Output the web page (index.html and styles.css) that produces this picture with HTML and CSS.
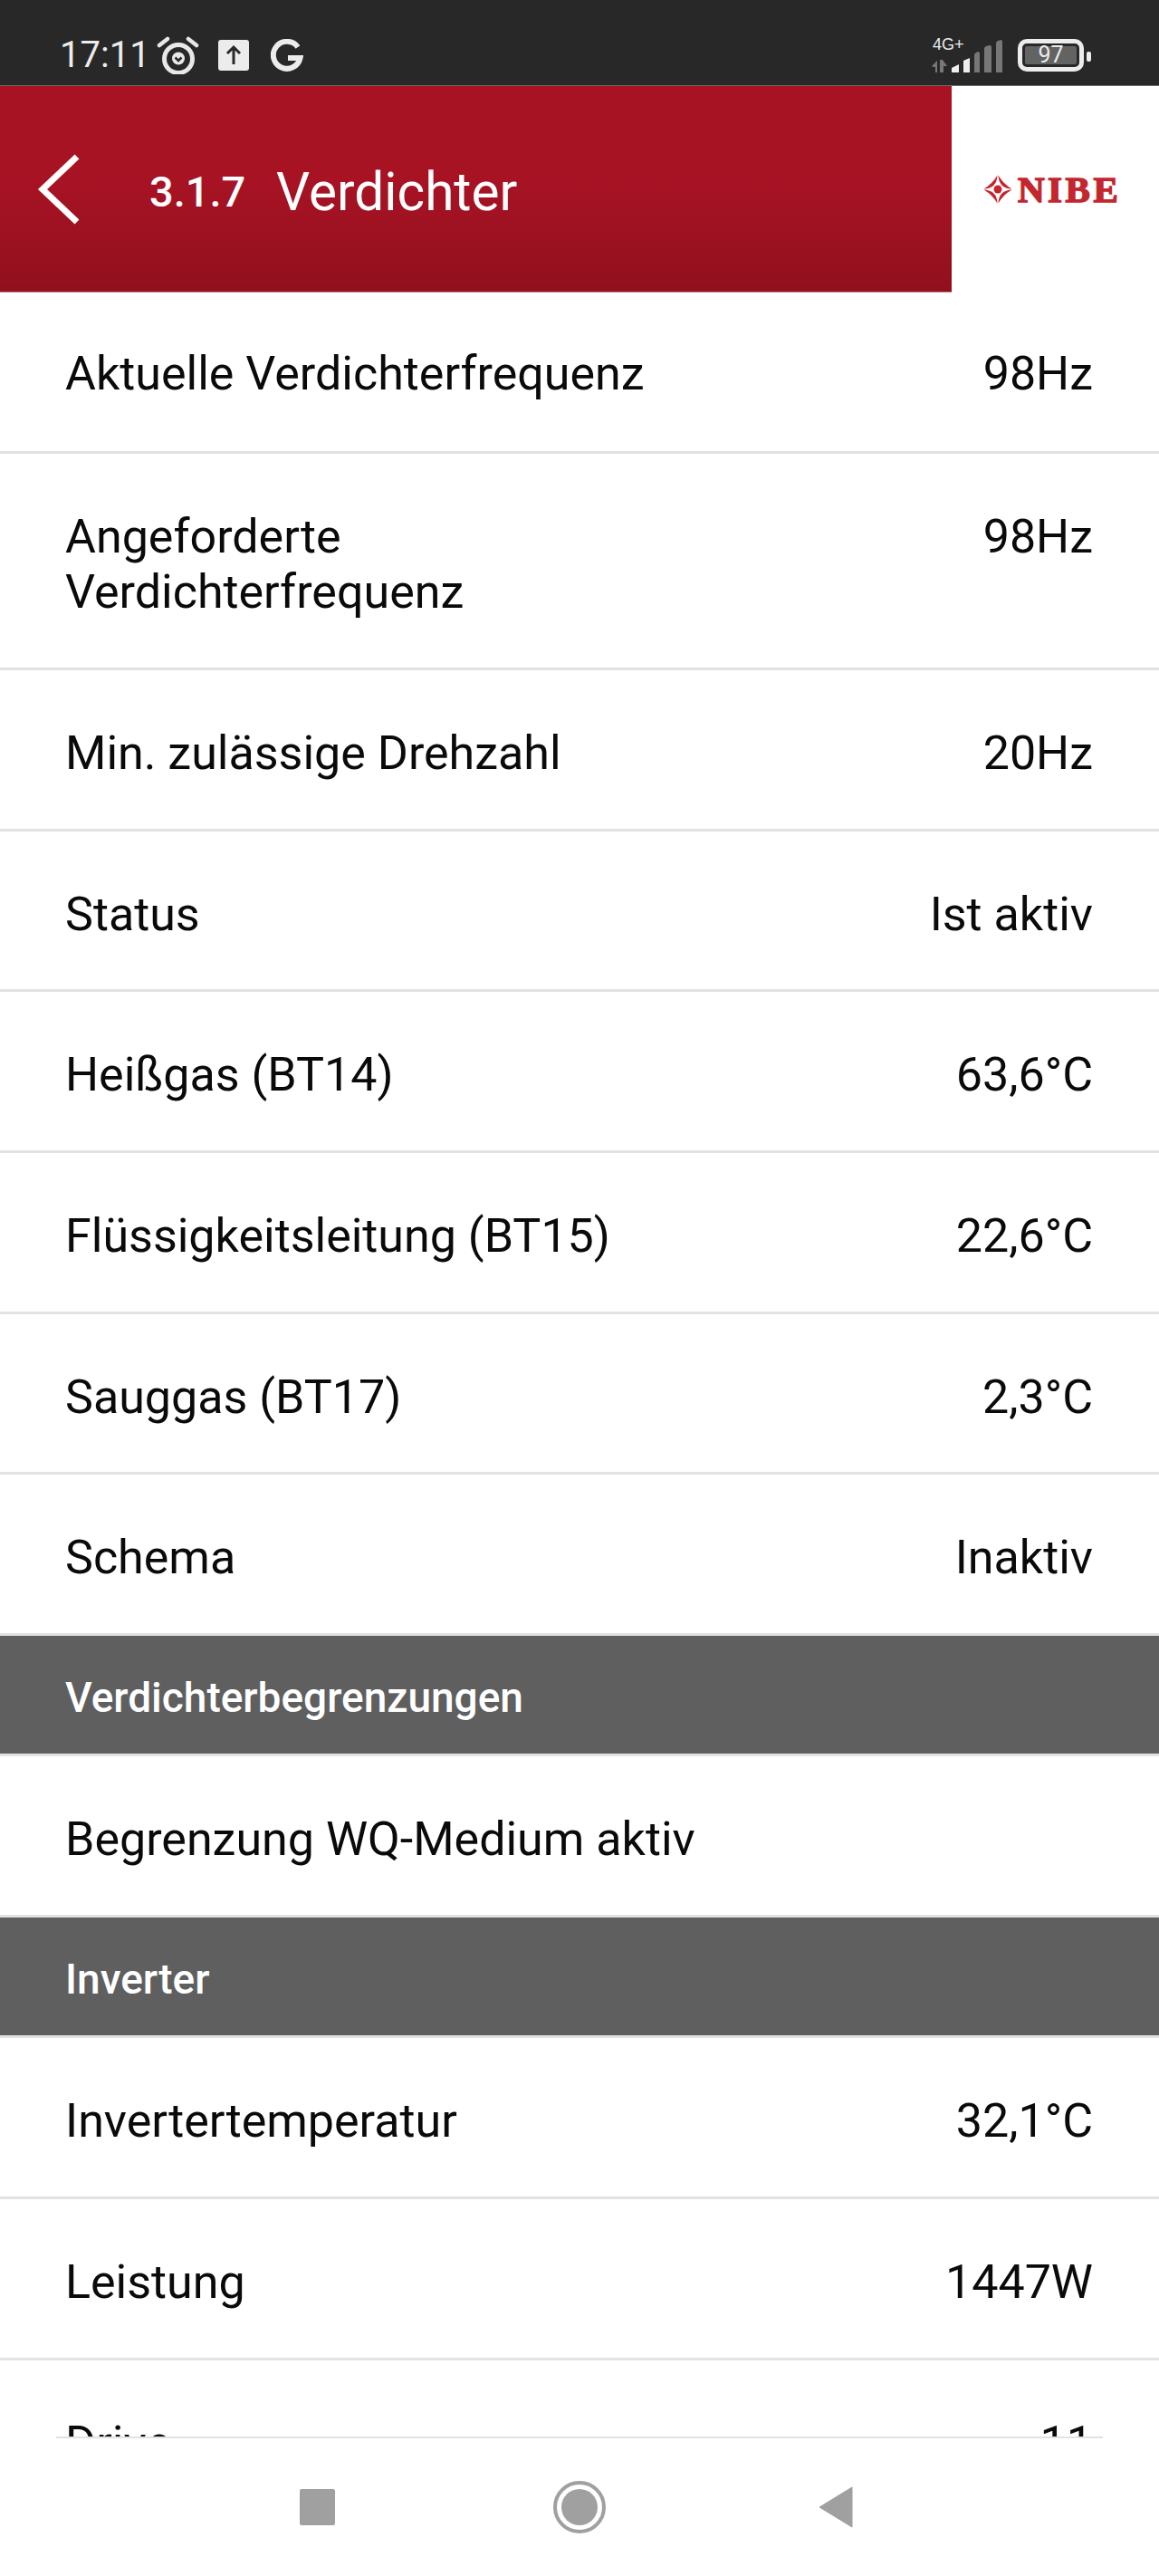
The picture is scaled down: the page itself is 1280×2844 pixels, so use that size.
FILE: index.html
```html
<!DOCTYPE html>
<html lang="de">
<head>
<meta charset="utf-8">
<title>Verdichter</title>
<link rel="stylesheet" href="styles.css">
</head>
<body>
<div class="phone">
  <div class="statusbar">
    <div class="status-left">
      <span class="clock">17:11</span>
      <svg class="ic-alarm" viewBox="0 0 47 43" width="47" height="43"><circle cx="24" cy="26" r="15.500" fill="none" stroke="#e8e8e8" stroke-width="5"/><circle cx="24" cy="25.500" r="7" fill="#e8e8e8"/><path d="M20.500 24.500l3.500 3.500 3.500-3.500" fill="none" stroke="#282828" stroke-width="2.500"/><path d="M3 11L12 4M35 4L44 11" stroke="#e8e8e8" stroke-width="4.500" stroke-linecap="round"/></svg>
      <svg class="ic-up" viewBox="0 0 34 34" width="34" height="34"><rect width="34" height="34" rx="3" fill="#ececec"/><path d="M17 27V9M10 15l7-7 7 7" fill="none" stroke="#282828" stroke-width="3"/></svg>
      <svg class="ic-g" viewBox="0 0 36 36" width="36" height="36"><path d="M30 9A15 15 0 1 0 32.500 21H19" fill="none" stroke="#ececec" stroke-width="6"/></svg>
    </div>
    <div class="status-right">
      <div class="net">
        <span class="net-label">4G+</span>
        <svg viewBox="0 0 80 37" width="80" height="37" class="net-bars"><path d="M2 29L8 23V36H6V30H4ZM11 22h3l5 7h-4v7h-4z" fill="#777"/><path d="M24 36V31l8-4v9zM37 36V23l7-3v16z" fill="#eee"/><path d="M49 36V17q0-2 2-3l2-1q2 0 2 2v21zM60 36V10q0-2 2-3l4-1q2 0 2 2v28zM73 36V4q0-2 2-3l3-1q2 0 2 2v34z" fill="#777"/></svg>
      </div>
      <div class="battery"><span class="battery-fill">97</span></div>
      <span class="battery-cap"></span>
    </div>
  </div>

  <header class="appbar">
    <div class="appbar-title">
      <svg class="back" viewBox="0 0 48 78" width="48" height="78"><path d="M44 3L6 39l38 36" fill="none" stroke="#fff" stroke-width="7"/></svg>
      <span class="menu-no">3.1.7</span>
      <span class="menu-name">Verdichter</span>
    </div>
    <div class="logo">
      <svg viewBox="0 0 32 32" width="32" height="32" fill="#c4262e"><path d="M.5 15.500Q10 10 15.500.5Q15 15 .5 15.500Z"/><path d="M31.500 15.500Q22 10 16.500.5Q17 15 31.500 15.500Z"/><path d="M.5 16.500Q10 22 15.500 31.500Q15 17 .5 16.500Z"/><path d="M31.500 16.500Q22 22 16.500 31.500Q17 17 31.500 16.500Z"/><circle cx="16" cy="16" r="4.500"/></svg>
      <span class="logo-text">NIBE</span>
    </div>
  </header>

  <main class="list">
    <div class="row row-first"><span>Aktuelle Verdichterfrequenz</span><span>98Hz</span></div>
    <div class="row row-tall"><span>Angeforderte<br>Verdichterfrequenz</span><span>98Hz</span></div>
    <div class="row"><span>Min. zulässige Drehzahl</span><span>20Hz</span></div>
    <div class="row"><span>Status</span><span>Ist aktiv</span></div>
    <div class="row"><span>Heißgas (BT14)</span><span>63,6°C</span></div>
    <div class="row"><span>Flüssigkeitsleitung (BT15)</span><span>22,6°C</span></div>
    <div class="row"><span>Sauggas (BT17)</span><span>2,3°C</span></div>
    <div class="row row-last"><span>Schema</span><span>Inaktiv</span></div>
    <div class="section">Verdichterbegrenzungen</div>
    <div class="row row-last"><span>Begrenzung WQ-Medium aktiv</span></div>
    <div class="section">Inverter</div>
    <div class="row"><span>Invertertemperatur</span><span>32,1°C</span></div>
    <div class="row"><span>Leistung</span><span>1447W</span></div>
    <div class="row"><span>Drive</span><span>11</span></div>
  </main>

  <footer class="navbar">
    <span class="nav-square"></span>
    <span class="nav-home"><span class="nav-home-dot"></span></span>
    <svg class="nav-back" viewBox="0 0 38 46" width="38" height="46"><path d="M37 1V45L1 23Z" fill="#a0a0a0" stroke="#a0a0a0" stroke-width="1" stroke-linejoin="round"/></svg>
  </footer>
</div>
</body>
</html>
```

FILE: styles.css
```css
* { box-sizing: border-box; }
html, body { margin: 0; padding: 0; background: #fff; }
body { font-family: Roboto, "Liberation Sans", sans-serif; color: #0a0a0a; }
.phone { width: 1280px; height: 2844px; display: flex; flex-direction: column; overflow: hidden; background: #fff; }

.statusbar { height: 95px; flex: none; background: #282828; display: flex; justify-content: space-between; align-items: flex-start; padding: 39px 0 0 66px; color: #ececec; border-bottom: 1px solid #6a6a6a; }
.status-left { display: flex; align-items: center; height: 43px; }
.clock { font-size: 40px; line-height: 46px; width: 107px; }
.ic-up { margin-left: 21px; }
.ic-g { margin-left: 24px; }
.status-right { display: flex; align-items: flex-start; padding-right: 75px; }
.net { width: 80px; height: 42px; position: relative; margin-right: 17px; }
.net-label { position: absolute; left: 3px; top: 1px; font-size: 18px; line-height: 18px; font-family: "Liberation Sans", sans-serif; }
.net-bars { position: absolute; left: 0; top: 5px; }
.battery { width: 73px; height: 36px; border: 5px solid #ececec; border-radius: 10px; padding: 3px; margin-top: 4px; }
.battery-fill { display: block; height: 20px; background: #636363; border-radius: 2px; text-align: center; font-size: 25px; line-height: 20px; width: 100%; }
.battery-cap { width: 5px; height: 11px; border-radius: 2px; background: #ececec; margin-left: 3px; margin-top: 18px; }

.appbar { height: 228px; flex: none; display: flex; background: #fff; }
.appbar-title { width: 1051px; flex: none; background: linear-gradient(#a81324 0%, #a81324 45%, #91101d 100%); display: flex; align-items: center; color: #fff; padding-left: 41px; border-bottom: 1px solid #c98a93; background-clip: padding-box; }
.back { margin-right: 76px; }
.menu-no { font-size: 47px; font-weight: 500; width: 140px; margin-top: 6px; }
.menu-name { font-size: 58.500px; margin-top: 6px; }
.logo { flex: 1; display: flex; align-items: center; padding-left: 35px; gap: 6px; }
.logo-text { font-family: "Liberation Serif", "DejaVu Serif", serif; font-weight: 700; font-size: 41px; line-height: 32px; color: #c4262e; letter-spacing: 3.500px; -webkit-text-stroke: 1.500px #c4262e; }

.list { flex: none; height: 2367px; overflow: hidden; }
.row { height: 177.700px; border-bottom: 3px solid #e2e2e2; display: flex; justify-content: space-between; align-items: flex-start; padding: 61px 73px 0 72px; font-size: 52px; line-height: 61px; overflow: hidden; }
.row-first { height: 178px; padding-top: 59px; }
.row-tall { height: 239px; }
.row-last { border-bottom: 0; height: 175px; }
.section { height: 136px; background: #5f5f5f; color: #fff; border-top: 3px solid #e2e2e2; border-bottom: 3px solid #e2e2e2; display: flex; align-items: center; padding: 6px 0 0 72px; font-size: 46px; font-weight: 500; }

.navbar { flex: 1; margin: 0 62px; border-top: 2px solid #e2e2e2; display: grid; grid-template-columns: 1fr auto 1fr; align-items: center; }
.nav-square { width: 39px; height: 40px; border-radius: 2px; background: #a0a0a0; justify-self: end; margin-right: 241px; }
.nav-home { width: 58px; height: 58px; border: 4px solid #a0a0a0; border-radius: 50%; display: flex; align-items: center; justify-content: center; }
.nav-home-dot { width: 40px; height: 40px; background: #a0a0a0; border-radius: 50%; }
.nav-back { justify-self: start; margin-left: 235px; }
```
